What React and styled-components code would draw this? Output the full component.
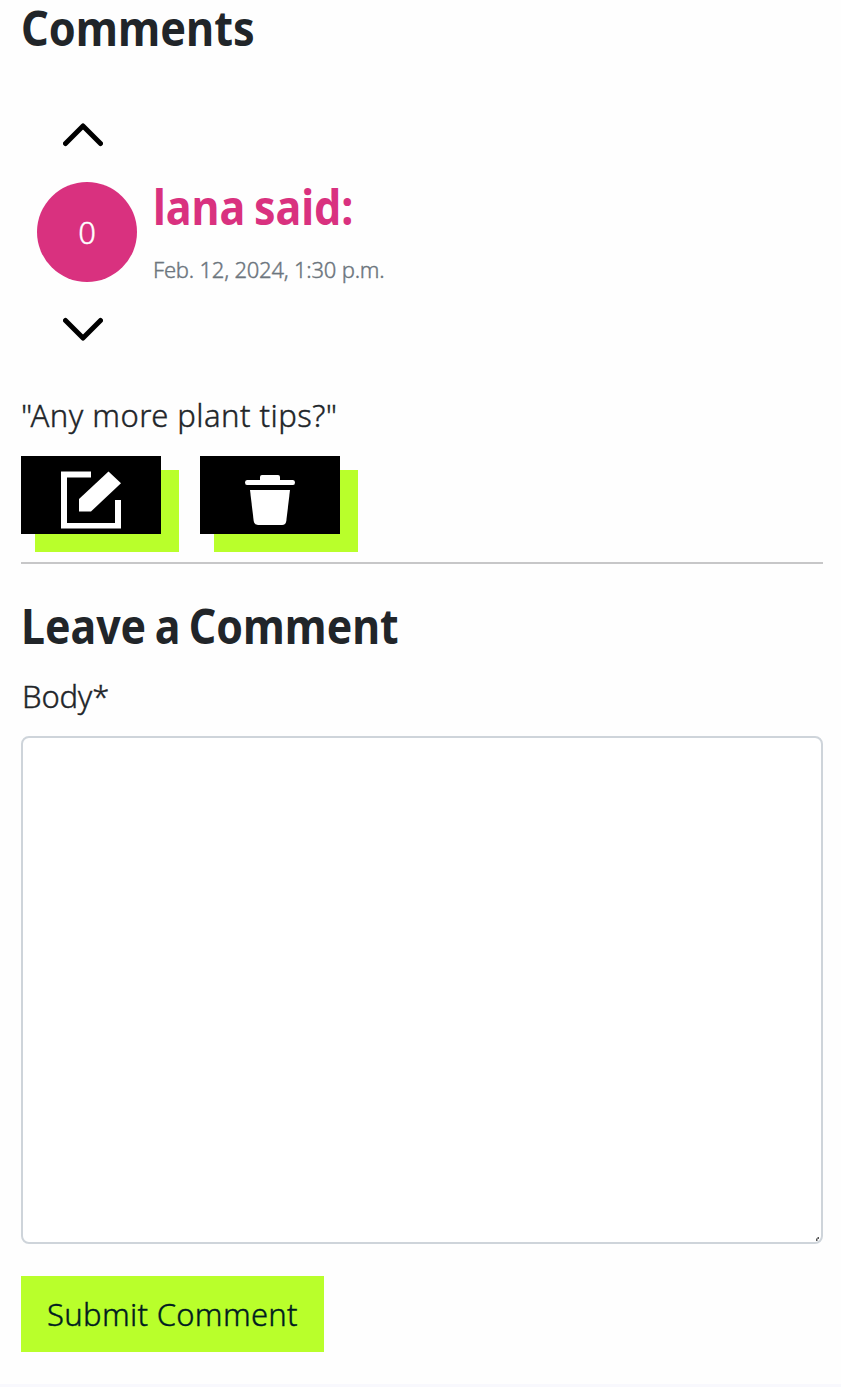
import React from "react";
import styled, { createGlobalStyle } from "styled-components";

const Global = createGlobalStyle`
  * { box-sizing: border-box; }
  body { margin: 0; background: #fefefe; color: #212529; font: 300 31px/48px "Noto Sans", sans-serif; -webkit-text-stroke: 0.4px; }
`;

const Page = styled.main`
  display: flex; flex-direction: column; height: 1387px;
`;
const Content = styled.div`
  display: flex; flex-direction: column; height: 1384px; padding: 0 18px 0 21px;
`;
const FooterEdge = styled.footer`
  height: 3px; background: #f8f8fd;
`;
const Heading = styled.h2`
  margin: 0; white-space: nowrap; width: max-content; transform-origin: left;
  font: 700 49px/54px "Noto Sans", sans-serif; -webkit-text-stroke: 0; word-spacing: -3px;
  color: ${(p) => p.$color || "#212529"};
  transform: scaleX(${(p) => p.$condense});
`;
const Comment = styled.article`
  display: flex; flex-direction: column; height: 510px;
`;
const CommentHead = styled.header`
  display: flex; gap: 16px; height: 220px; margin-top: 69px; padding-left: 16px;
`;
const Votes = styled.div`
  display: flex; flex-direction: column; width: 100px;
`;
const VoteButton = styled.button`
  display: block; border: 0; padding: 0; background: none; width: 40px; height: 24px; margin-left: 26px;
  svg { display: block; }
`;
const Score = styled.span`
  display: flex; align-items: center; justify-content: center;
  width: 100px; height: 100px; margin: 35px 0; border-radius: 50%;
  background: #d9317f; color: #fff;
`;
const Meta = styled.div`
  display: flex; flex-direction: column; padding-top: 56px;
`;
const Posted = styled.time`
  margin-top: 18px; font-size: 22px; line-height: 36px; color: #6c757d; white-space: nowrap;
  letter-spacing: -0.22px;
`;
const Text = styled.p`
  margin: 48px 0 0; line-height: 48px; white-space: nowrap; letter-spacing: 0.45px;
`;
const Actions = styled.div`
  display: flex; gap: 39px; margin-top: 17px;
`;
const ActionButton = styled.button`
  display: flex; align-items: center; justify-content: center; padding: 0;
  width: 140px; height: 78px; border: 0; background: #000; color: #fff;
  box-shadow: 16px 16px 0 2px #b9ff2b;
`;
const Divider = styled.hr`
  margin: 28px 0 0; border: 0; height: 2px; background: #c7c7c8; flex: none;
`;
const Form = styled.form`
  display: flex; flex-direction: column; align-items: flex-start; padding-top: 34px;
`;
const Label = styled.label`
  margin-top: 20px; line-height: 48px; padding-left: 1px; letter-spacing: -0.2px;
`;
const Field = styled.div`
  position: relative; width: 100%; height: 508px; margin-top: 16px;
`;
const TextArea = styled.textarea`
  display: block; width: 100%; height: 100%; resize: none; padding: 12px 24px;
  border: 2px solid #ced4da; border-radius: 8px; background: #fff; font: inherit; outline: 0;
`;
const Grip = styled.svg`
  position: absolute; right: 3px; bottom: 3px;
`;
const Submit = styled.button`
  width: 303px; height: 76px; margin-top: 32px; padding: 0; border: 0; background: #b9ff2b;
  color: #001c20; font: inherit; white-space: nowrap; letter-spacing: 0.3px;
`;

const Chevron = ({ down }) => (
  <svg width="40" height="24" viewBox="0 0 40 24" fill="none" stroke="#000" strokeWidth="5" strokeLinecap="round" strokeLinejoin="round">
    <path d={down ? "M2.5 3.5L20 21L37.5 3.5" : "M2.5 20.5L20 3L37.5 20.5"} />
  </svg>
);

const EditIcon = () => (
  <svg width="140" height="78" fill="currentColor" stroke="none">
    <path d="M40 15.5H70V21.5H46V67H94V44H100V72.5H40Z" />
    <path d="M58 43L87.5 15.5L100 27.2L70 55.5H58Z" />
  </svg>
);

const TrashIcon = () => (
  <svg width="140" height="78" fill="currentColor" stroke="none">
    <path d="M60 24V21Q60 19 62 19H78Q80 19 80 21V24H93Q95 24 95 26.500Q95 29 93 29H47Q45 29 45 26.500Q45 24 47 24Z" />
    <path d="M50 34H90L86.300 65Q85.800 69 82 69H58Q54.200 69 53.700 65Z" />
  </svg>
);

export default function App() {
  return (
    <Page>
      <Global />
      <Content>
        <Heading $condense={0.883}>Comments</Heading>
        <Comment>
          <CommentHead>
            <Votes>
              <VoteButton aria-label="Upvote"><Chevron /></VoteButton>
              <Score>0</Score>
              <VoteButton aria-label="Downvote"><Chevron down /></VoteButton>
            </Votes>
            <Meta>
              <Heading as="h3" $color="#d9317f" $condense={0.878}>lana said:</Heading>
              <Posted>Feb. 12, 2024, 1:30 p.m.</Posted>
            </Meta>
          </CommentHead>
          <Text>"Any more plant tips?"</Text>
          <Actions>
            <ActionButton aria-label="Edit"><EditIcon /></ActionButton>
            <ActionButton aria-label="Delete"><TrashIcon /></ActionButton>
          </Actions>
          <Divider />
        </Comment>
        <Form>
          <Heading $condense={0.874}>Leave a Comment</Heading>
          <Label htmlFor="body">Body*</Label>
          <Field>
            <TextArea id="body" />
            <Grip width="4" height="4"><path d="M0 1.500H1.500V0H3V2H1.500V4H0Z" fill="#555" /></Grip>
          </Field>
          <Submit type="button">Submit Comment</Submit>
        </Form>
      </Content>
      <FooterEdge />
    </Page>
  );
}
